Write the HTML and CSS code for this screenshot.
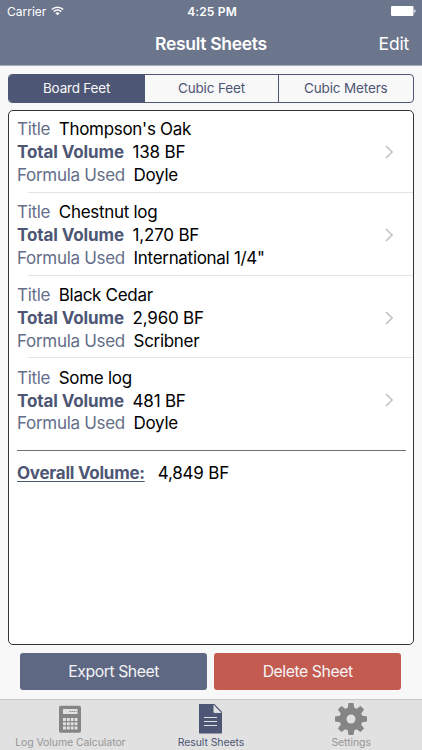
FILE: index.html
```html
<!DOCTYPE html>
<html lang="en">
<head>
<meta charset="utf-8">
<title>Result Sheets</title>
<link rel="stylesheet" href="styles.css">
</head>
<body>
<header class="header">
  <div class="status">
    <div class="carrier"><span class="carrier-name">Carrier</span>
      <svg class="wifi" width="13" height="10" viewBox="0 0 13 10" fill="none" stroke="#fff" stroke-width="1.5"><path d="M.8 3.5a8.2 8.2 0 0 1 11.4 0M2.8 5.6a5.3 5.3 0 0 1 7.4 0"/><path d="M4.4 7.2a3 3 0 0 1 4.2 0L6.5 9.3z" fill="#fff" stroke="none"/></svg>
    </div>
    <span class="time">4:25 PM</span>
    <svg class="battery" width="25" height="10" viewBox="0 0 25 10" fill="#fff"><rect width="22.5" height="10" rx="1.2"/><path d="M23.3 3.2c1.6.3 1.6 3.3 0 3.6z"/></svg>
  </div>
  <div class="nav"><span></span><h1 class="nav-title">Result Sheets</h1><span class="edit">Edit</span></div>
</header>
<main class="main">
  <div class="segments"><span class="segment active">Board Feet</span><span class="segment">Cubic Feet</span><span class="segment">Cubic Meters</span></div>
  <section class="sheet">
    <article class="row">
      <div class="line"><span class="k k-title">Title</span><span class="v">Thompson's Oak</span></div>
      <div class="line"><span class="k k-total">Total Volume</span><span class="v num">138 BF</span></div>
      <div class="line"><span class="k k-formula">Formula Used</span><span class="v">Doyle</span></div>
      <svg class="chevron" width="8" height="14" viewBox="0 0 8 14"><path d="M1 1l6 6-6 6"/></svg>
    </article>
    <article class="row">
      <div class="line"><span class="k k-title">Title</span><span class="v">Chestnut log</span></div>
      <div class="line"><span class="k k-total">Total Volume</span><span class="v num">1,270 BF</span></div>
      <div class="line"><span class="k k-formula">Formula Used</span><span class="v">International 1/4"</span></div>
      <svg class="chevron" width="8" height="14" viewBox="0 0 8 14"><path d="M1 1l6 6-6 6"/></svg>
    </article>
    <article class="row">
      <div class="line"><span class="k k-title">Title</span><span class="v">Black Cedar</span></div>
      <div class="line"><span class="k k-total">Total Volume</span><span class="v num">2,960 BF</span></div>
      <div class="line"><span class="k k-formula">Formula Used</span><span class="v">Scribner</span></div>
      <svg class="chevron" width="8" height="14" viewBox="0 0 8 14"><path d="M1 1l6 6-6 6"/></svg>
    </article>
    <article class="row">
      <div class="line"><span class="k k-title">Title</span><span class="v">Some log</span></div>
      <div class="line"><span class="k k-total">Total Volume</span><span class="v num">481 BF</span></div>
      <div class="line"><span class="k k-formula">Formula Used</span><span class="v">Doyle</span></div>
      <svg class="chevron" width="8" height="14" viewBox="0 0 8 14"><path d="M1 1l6 6-6 6"/></svg>
    </article>
    <div class="overall"><span class="overall-key">Overall Volume:</span><span class="v num">4,849 BF</span></div>
  </section>
  <div class="actions"><button class="button export">Export Sheet</button><button class="button delete">Delete Sheet</button></div>
</main>
<nav class="tabs">
  <div class="tab">
    <svg width="32" height="32" viewBox="0 0 32 32"><rect x="5" y="2.7" width="22" height="27" rx="1.6" fill="#858585"/><path d="M9 6h14.5v5H9z" fill="#e1e1e1"/><path d="M15.5 8.5h7" stroke="#858585" stroke-width="1.2" stroke-dasharray="1.4 .7"/><path d="M9 16.5h14.5M9 20.7h14.5M9 24.9h14.5" stroke="#e1e1e1" stroke-width="3" stroke-dasharray="2.9 .95"/></svg>
    <span class="tab-label calc-label">Log Volume Calculator</span>
  </div>
  <div class="tab selected">
    <svg width="32" height="32" viewBox="0 0 32 32"><path d="M4 1h15.5L27 8.8v21.7H4z" fill="#4d5674"/><path d="M19 2.2v7.2h7" fill="#e1e1e1" stroke="#e1e1e1" stroke-width="1"/><path d="M9 14.5h13M9 18.5h13M9 22.5h13" stroke="#e1e1e1" stroke-width="1"/></svg>
    <span class="tab-label result-label">Result Sheets</span>
  </div>
  <div class="tab">
    <svg width="32" height="32" viewBox="0 0 32 32"><g fill="#858585"><circle cx="16" cy="16" r="11.5"/><g id="teeth"><path d="M13.5 0h5l1 6h-7zM13.5 32h5l1-6h-7zM0 13.5v5l6 1v-7zM32 13.5v5l-6 1v-7z"/></g><use href="#teeth" transform="rotate(45 16 16)"/></g><circle cx="16" cy="16" r="4.5" fill="#e1e1e1"/></svg>
    <span class="tab-label settings-label">Settings</span>
  </div>
</nav>
</body>
</html>
```
FILE: styles.css
```css
* { box-sizing: border-box; }
body { margin: 0; width: 422px; height: 750px; display: flex; flex-direction: column; overflow: hidden; background: #f8f8f8; font-family: Inter, "Liberation Sans", sans-serif; color: #000; }
.header { height: 66px; background: #6b758c; border-bottom: 1px solid #a9aeba; color: #fff; }
.status { height: 22px; display: grid; grid-template-columns: 1fr auto 1fr; align-items: center; padding: 0 6px 0 7px; }
.carrier { display: flex; align-items: center; gap: 5px; font-size: 12px; letter-spacing: 0; }
.time { font-size: 12px; font-weight: 600; letter-spacing: .15px; padding-left: 1px; }
.battery { justify-self: end; }
.nav { height: 42px; display: grid; grid-template-columns: 1fr auto 1fr; align-items: center; padding: 0 13px; }
.nav-title { margin: 0; font-size: 17.5px; font-weight: 600; letter-spacing: -.3px; }
.edit { justify-self: end; font-size: 17.5px; letter-spacing: -.2px; }
.main { flex: 1; padding: 7.5px 8px 0 8.4px; }
.segments { height: 29.5px; margin-right: .5px; display: grid; grid-template-columns: repeat(3, 1fr); border: 1px solid #4d5674; border-radius: 4px; overflow: hidden; }
.segment { display: flex; align-items: center; justify-content: center; font-size: 13.5px; letter-spacing: -.15px; color: #4d5674; border-left: 1px solid #4d5674; }
.segment.active { background: #4d5674; color: #f8f8f8; border-left: 0; letter-spacing: -.2px; }
.sheet { height: 535px; margin: 7px 0 0; width: 405.4px; border: 1.5px solid #333; border-radius: 5px; background: #fff; }
.row { position: relative; height: 82.8px; padding: 7px 7.6px 0; }
.row:not(:nth-of-type(4))::after { content: ""; position: absolute; left: 19px; right: 0; bottom: 1px; height: 1px; background: #e4e4e6; }
.line { height: 22.8px; display: flex; align-items: center; gap: 8.6px; white-space: nowrap; }
.k, .v { font-size: 17px; letter-spacing: -.3px; }
.v.num { letter-spacing: -.2px; }
.k { color: #656e89; letter-spacing: -.3px; }
.k-total { color: #4d5674; font-weight: 700; letter-spacing: -.1px; }
.chevron { position: absolute; right: 20px; top: 34px; fill: none; stroke: #c4c4c9; stroke-width: 1.7; }
.overall { margin: 7.5px 7px 0 7.6px; height: 46px; border-top: 1px solid #707070; display: flex; align-items: center; gap: 13px; }
.overall-key { font-size: 17px; letter-spacing: -.25px; font-weight: 700; color: #4d5674; text-decoration: underline; text-decoration-thickness: 1px; text-underline-offset: 2px; }
.actions { margin: 8px 12px 0; display: grid; grid-template-columns: 186.5px 186.5px; gap: 7.5px; }
.button { height: 37px; border: 0; border-radius: 3px; padding: 0; color: #f4f4f6; font: 15.8px Inter, "Liberation Sans", sans-serif; letter-spacing: -.45px; }
.export { background: #5e6882; }
.delete { background: #c45b51; }
.tabs { height: 51px; border-top: 1px solid #c8c8c8; background: #e1e1e1; display: grid; grid-template-columns: repeat(3, 1fr); color: #969696; }
.tab { display: flex; flex-direction: column; align-items: center; padding-top: 3px; }
.tab:last-child { padding-right: 1px; }
.tab-label { font-size: 10.5px; line-height: 15px; letter-spacing: -.08px; white-space: nowrap; }
.selected { color: #4d5674; }
```
